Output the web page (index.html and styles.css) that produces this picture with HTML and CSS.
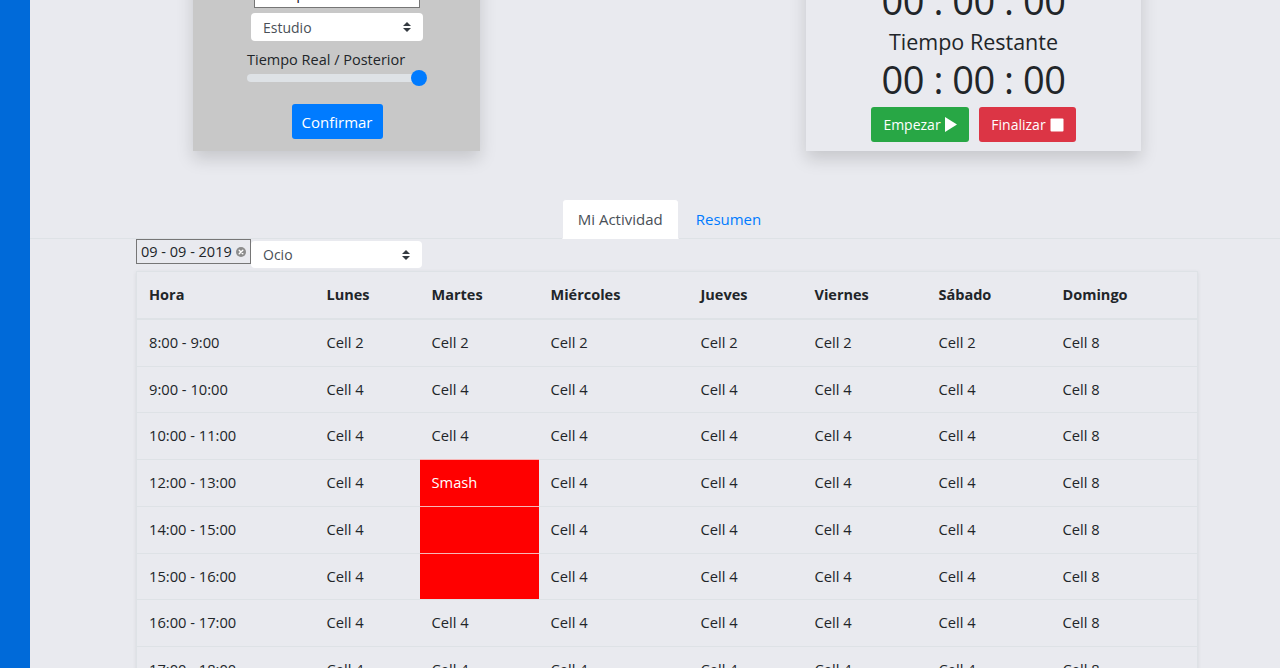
FILE: index.html
```html
<!DOCTYPE html>
<html lang="es">
<head>
<meta charset="utf-8">
<title>Mi Actividad</title>
<link rel="stylesheet" href="styles.css">
</head>
<body>
<div class="app">
  <aside class="sidebar"></aside>
  <main class="main">
    <section class="top-row">
      <div class="card card-form">
        <h5 class="card-title">Nueva Actividad</h5>
        <input class="text-input" type="text" value="Tiempo">
        <div class="select-wrap select-estudio">
          <select class="select"><option>Estudio</option></select>
          <svg class="select-caret" viewBox="0 0 4 5" width="8" height="10"><path d="M2 0L0 2h4zm0 5L0 3h4z" fill="#343a40"/></svg>
        </div>
        <label class="range-label">Tiempo Real / Posterior</label>
        <input class="range" type="range" min="0" max="100" value="100">
        <button class="btn btn-primary btn-confirm">Confirmar</button>
      </div>
      <div class="card card-timer">
        <div class="timer-label">Tiempo Transcurrido</div>
        <div class="timer">00 : 00 : 00</div>
        <div class="timer-label timer-label-second">Tiempo Restante</div>
        <div class="timer">00 : 00 : 00</div>
        <div class="timer-actions">
          <button class="btn btn-success">Empezar <svg class="btn-icon" viewBox="0 0 12 15" width="12" height="15"><path d="M0 0L12 7.5L0 15z" fill="#fff"/></svg></button>
          <button class="btn btn-danger">Finalizar <svg class="btn-icon" viewBox="0 0 14 14" width="14" height="14"><rect x="0.5" y="0.5" width="13" height="13" rx="1" fill="#fff"/></svg></button>
        </div>
      </div>
    </section>

    <nav class="tabs">
      <a class="tab tab-active">Mi Actividad</a>
      <a class="tab">Resumen</a>
    </nav>

    <section class="activity">
      <div class="filters">
        <div class="date-input">
          <span>09 - 09 - 2019</span>
          <svg class="clear-icon" viewBox="0 0 10 10" width="10" height="10"><circle cx="5" cy="5" r="5" fill="#8c8c8c"/><path d="M3.2 3.2L6.8 6.8M6.8 3.2L3.2 6.8" stroke="#fff" stroke-width="1.4" stroke-linecap="round"/></svg>
        </div>
        <div class="select-wrap select-ocio">
          <select class="select"><option>Ocio</option></select>
          <svg class="select-caret" viewBox="0 0 4 5" width="8" height="10"><path d="M2 0L0 2h4zm0 5L0 3h4z" fill="#343a40"/></svg>
        </div>
      </div>

      <table class="schedule">
        <colgroup>
          <col class="c-hora"><col class="c-lun"><col class="c-mar"><col class="c-mie"><col class="c-jue"><col class="c-vie"><col class="c-sab"><col class="c-dom">
        </colgroup>
        <thead>
          <tr><th>Hora</th><th>Lunes</th><th>Martes</th><th>Miércoles</th><th>Jueves</th><th>Viernes</th><th>Sábado</th><th>Domingo</th></tr>
        </thead>
        <tbody>
          <tr><td>8:00 - 9:00</td><td>Cell 2</td><td>Cell 2</td><td>Cell 2</td><td>Cell 2</td><td>Cell 2</td><td>Cell 2</td><td>Cell 8</td></tr>
          <tr><td>9:00 - 10:00</td><td>Cell 4</td><td>Cell 4</td><td>Cell 4</td><td>Cell 4</td><td>Cell 4</td><td>Cell 4</td><td>Cell 8</td></tr>
          <tr><td>10:00 - 11:00</td><td>Cell 4</td><td>Cell 4</td><td>Cell 4</td><td>Cell 4</td><td>Cell 4</td><td>Cell 4</td><td>Cell 8</td></tr>
          <tr><td>12:00 - 13:00</td><td>Cell 4</td><td class="busy">Smash</td><td>Cell 4</td><td>Cell 4</td><td>Cell 4</td><td>Cell 4</td><td>Cell 8</td></tr>
          <tr><td>14:00 - 15:00</td><td>Cell 4</td><td class="busy"></td><td>Cell 4</td><td>Cell 4</td><td>Cell 4</td><td>Cell 4</td><td>Cell 8</td></tr>
          <tr><td>15:00 - 16:00</td><td>Cell 4</td><td class="busy"></td><td>Cell 4</td><td>Cell 4</td><td>Cell 4</td><td>Cell 4</td><td>Cell 8</td></tr>
          <tr><td>16:00 - 17:00</td><td>Cell 4</td><td>Cell 4</td><td>Cell 4</td><td>Cell 4</td><td>Cell 4</td><td>Cell 4</td><td>Cell 8</td></tr>
          <tr><td>17:00 - 18:00</td><td>Cell 4</td><td>Cell 4</td><td>Cell 4</td><td>Cell 4</td><td>Cell 4</td><td>Cell 4</td><td>Cell 8</td></tr>
          <tr><td>18:00 - 19:00</td><td>Cell 4</td><td>Cell 4</td><td>Cell 4</td><td>Cell 4</td><td>Cell 4</td><td>Cell 4</td><td>Cell 8</td></tr>
        </tbody>
      </table>
    </section>
  </main>
</div>
</body>
</html>
```

FILE: styles.css
```css
* { box-sizing: border-box; }

html, body {
  margin: 0;
  height: 668px;
  overflow: hidden;
}

body {
  font-family: "Open Sans", "Noto Sans", sans-serif;
  font-size: 15px;
  line-height: 1.5;
  color: #212529;
  background: #e9eaef;
}

.app {
  display: flex;
  min-height: 668px;
}

.sidebar {
  flex: 0 0 30px;
  background: #006ad9;
}

.main {
  flex: 1;
  min-width: 0;
}

/* ---------- top cards ---------- */
.top-row {
  display: flex;
  align-items: flex-end;
  margin-top: -68px;
  padding-left: 163px;
  gap: 326px;
}

.card {
  box-shadow: 0 8px 16px rgba(0, 0, 0, 0.15);
}

.card-form {
  width: 287px;
  background: #c8c8c8;
  padding: 12px 53px 12px 54px;
  display: flex;
  flex-direction: column;
  align-items: center;
}

.card-title {
  margin: 0 0 6px;
  font-size: 18px;
  line-height: 28px;
  font-weight: 500;
}

.text-input {
  width: 166px;
  height: 30px;
  border: 1px solid #767676;
  background: #fff;
  font: inherit;
  font-size: 15px;
  color: #212529;
  padding: 0 7px;
  margin: 0;
}

.select-wrap {
  position: relative;
}

.select {
  -webkit-appearance: none;
  appearance: none;
  display: block;
  width: 100%;
  height: 100%;
  border: 0;
  border-radius: 4px;
  background: #fff;
  font-family: inherit;
  font-size: 14px;
  color: #495057;
  padding: 0 0 0 12px;
  margin: 0;
}

.select-caret {
  position: absolute;
  right: 12px;
  top: 50%;
  margin-top: -5px;
}

.select-estudio {
  width: 172px;
  height: 28px;
  margin-top: 5px;
}

.range-label {
  align-self: stretch;
  margin-top: 9px;
  height: 20px;
  line-height: 20px;
  font-size: 14.5px;
  color: #212529;
}

.range {
  -webkit-appearance: none;
  appearance: none;
  width: 180px;
  height: 16px;
  margin: 0;
  background: transparent;
}

.range::-webkit-slider-runnable-track {
  height: 8px;
  border-radius: 4px;
  background: #dee2e6;
}

.range::-webkit-slider-thumb {
  -webkit-appearance: none;
  width: 16px;
  height: 16px;
  margin-top: -4px;
  border-radius: 50%;
  background: #007bff;
  border: 0;
}

.btn {
  display: inline-flex;
  align-items: center;
  justify-content: center;
  gap: 4px;
  height: 35px;
  padding: 0 10px;
  border: 0;
  border-radius: 3px;
  font-family: inherit;
  font-size: 15px;
  color: #fff;
  white-space: nowrap;
}

.btn-icon {
  flex-shrink: 0;
}

.btn-primary { background: #007bff; }
.btn-success { background: #28a745; }
.btn-danger { background: #dc3545; }

.btn-confirm {
  margin-top: 18px;
  width: 91px;
}

.card-timer {
  width: 335px;
  background: #e9eaef;
  padding: 9px 20px;
  text-align: center;
}

.timer-label {
  font-size: 21.5px;
  line-height: 27px;
  color: #212529;
}

.timer-label-second {
  margin-top: 5px;
}

.timer {
  margin-top: 5px;
  font-size: 38px;
  line-height: 46px;
  letter-spacing: -0.5px;
  color: #212529;
}

.timer-label-second + .timer {
  margin-top: 1px;
  margin-bottom: 1px;
}

.timer-actions {
  display: flex;
  justify-content: center;
  gap: 10px;
  margin-top: 5px;
}

.timer-actions .btn {
  font-size: 14px;
}

.timer-actions .btn-success { width: 98px; }
.timer-actions .btn-danger { width: 97px; }

/* ---------- tabs ---------- */
.tabs {
  display: flex;
  justify-content: center;
  padding-left: 29px;
  margin-top: 48px;
  border-bottom: 1px solid #dee2e6;
}

.tab {
  display: block;
  height: 40px;
  padding: 0 15px;
  line-height: 38px;
  margin-bottom: -1px;
  border: 1px solid transparent;
  border-radius: 4px 4px 0 0;
  color: #007bff;
  font-size: 15px;
}

.tab-active {
  background: #fff;
  color: #495057;
  border-color: #e9eaef #e9eaef #fff;
}

.tab + .tab {
  margin-left: 1px;
}

/* ---------- activity ---------- */
.activity {
  padding-left: 106px;
}

.filters {
  display: flex;
  align-items: flex-start;
}

.date-input {
  display: flex;
  align-items: center;
  gap: 4px;
  width: 115px;
  height: 25px;
  border: 1px solid #767676;
  padding: 0 4px;
  font-size: 14.5px;
  color: #212529;
  white-space: nowrap;
}

.clear-icon {
  flex-shrink: 0;
}

.select-ocio {
  width: 171px;
  height: 27px;
  margin-top: 2px;
}

.schedule {
  margin-top: 3px;
  width: 1061px;
  table-layout: fixed;
  border-collapse: collapse;
  border: 1px solid #dee2e6;
  box-shadow: 0 1px 4px rgba(0, 0, 0, 0.08);
  font-size: 14.7px;
}

.c-hora { width: 178px; }
.c-lun { width: 105px; }
.c-mar { width: 119px; }
.c-mie { width: 150px; }
.c-jue { width: 114px; }
.c-vie { width: 124px; }
.c-sab { width: 124px; }
.c-dom { width: 147px; }

.schedule th,
.schedule td {
  text-align: left;
  padding: 12px 12px;
  vertical-align: top;
}

.schedule th {
  font-size: 14.5px;
  line-height: 22px;
  height: 46px;
  font-weight: 700;
  border-bottom: 2px solid #dee2e6;
}

.schedule td {
  line-height: 21.7px;
  border-top: 1px solid #dee2e6;
}

.schedule td.busy {
  background: #ff0000;
  color: #fff;
  border-top-color: #f6b6b6;
}
```
